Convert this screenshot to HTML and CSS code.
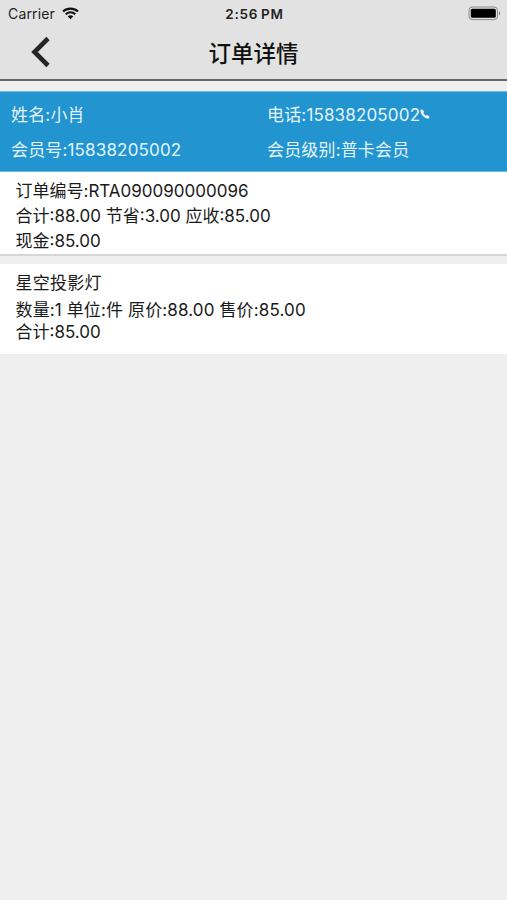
FILE: index.html
```html
<!DOCTYPE html>
<html lang="zh-CN">
<head>
  <meta charset="UTF-8">
  <meta name="viewport" content="width=device-width, initial-scale=1.0">
  <title>订单详情</title>
  <link rel="stylesheet" href="styles.css">
</head>
<body>
  <header class="header">
    <div class="status-bar">
      <div class="carrier">
        <span>Carrier</span>
        <svg class="wifi" width="17" height="13" viewBox="0 0 17 13">
          <path d="M1 4.6C5.2.6 11.8.6 16 4.6M3.7 7.3c2.8-2.6 6.8-2.6 9.6 0" fill="none" stroke="#111" stroke-width="2.1"/>
          <path d="M5.7 9.3c1.7-1.5 3.9-1.5 5.6 0L8.5 12.2z" fill="#111"/>
        </svg>
      </div>
      <div class="time">2:56 PM</div>
      <svg class="battery" width="33" height="15" viewBox="0 0 33 15">
        <rect x="1" y="1" width="28.5" height="12.6" rx="3.2" fill="none" stroke="#888" stroke-width="1"/>
        <rect x="2.8" y="2.8" width="25" height="9" rx="1.5" fill="#000"/>
        <path d="M31 5.3c1.5.8 1.5 3.2 0 4z" fill="#777"/>
      </svg>
    </div>
    <div class="nav-bar">
      <a href="#" class="back-btn">
        <svg width="20" height="32" viewBox="0 0 20 32">
          <path d="M17 2.5L3.5 16 17 29.5" fill="none" stroke="#262626" stroke-width="4.6"/>
        </svg>
      </a>
      <h1 class="title">订单详情</h1>
    </div>
  </header>

  <section class="member">
    <div>姓名:小肖</div>
    <div class="phone">电话:15838205002<svg width="10" height="10" viewBox="0 0 10 10"><path d="M.6 1.1L2.2.3 4 2.7 3.2 4C4 5.3 4.8 6 6 6.7l1.3-.6 2.3 1.8-.9 1.5C5 10.3-.1 5 .6 1.1z" fill="#fff"/></svg></div>
    <div>会员号:15838205002</div>
    <div>会员级别:普卡会员</div>
  </section>

  <section class="order">
    <p>订单编号:RTA090090000096</p>
    <p>合计:88.00 节省:3.00 应收:85.00</p>
    <p>现金:85.00</p>
  </section>

  <section class="goods">
    <p class="name">星空投影灯</p>
    <p class="detail">数量:1 单位:件 原价:88.00 售价:85.00</p>
    <p>合计:85.00</p>
  </section>
</body>
</html>
```
FILE: styles.css
```css
body {
  margin: 0;
  background: #efefef;
  color: #1a1a1a;
  font-family: Inter, "Noto Sans CJK SC", sans-serif;
  font-size: 17px;
}
p {
  margin: 0;
}
.header {
  box-sizing: border-box;
  height: 81px;
  background: #e2e2e2;
  border-bottom: 2px solid #666;
}
.status-bar {
  display: grid;
  grid-template-columns: 1fr auto 1fr;
  align-items: center;
  height: 27px;
  padding: 0 6px 0 8px;
  font-size: 14px;
  color: #222;
}
.carrier {
  display: flex;
  align-items: center;
  gap: 7px;
  letter-spacing: 0.15px;
}
.time {
  font-size: 13.5px;
  font-weight: 600;
  letter-spacing: 0.7px;
  word-spacing: -1px;
}
.battery {
  justify-self: end;
}
.nav-bar {
  display: grid;
  grid-template-columns: 60px 1fr 60px;
  align-items: center;
  height: 49px;
}
.back-btn {
  display: flex;
  padding-left: 31px;
}
.title {
  margin: 0;
  text-align: center;
  font-size: 22.5px;
  font-weight: 500;
  color: #111;
}
.member {
  box-sizing: border-box;
  display: grid;
  grid-template-columns: 256px 1fr;
  grid-template-rows: 35px 35px;
  align-items: center;
  height: 81px;
  margin-top: 10px;
  padding: 5px 0 0 11px;
  background: #2294cf;
  border-top: 1px solid #6db9df;
  border-bottom: 1px solid #6db9df;
  color: #e4f5fd;
  letter-spacing: 0.16px;
}
.member div {
  margin-top: -2px;
}
.phone {
  display: flex;
  align-items: center;
}
.order {
  box-sizing: border-box;
  height: 84px;
  padding: 7px 15.5px 0;
  background: #fff;
  border-bottom: 2px solid #d6d6d6;
  line-height: 25px;
}
.goods {
  box-sizing: border-box;
  height: 90px;
  margin-top: 8px;
  padding: 8px 15.5px 0;
  background: #fff;
  line-height: 22.5px;
}
.name {
  margin-bottom: 4px;
  letter-spacing: 0.25px;
}
.detail {
  letter-spacing: 0.13px;
}
```
